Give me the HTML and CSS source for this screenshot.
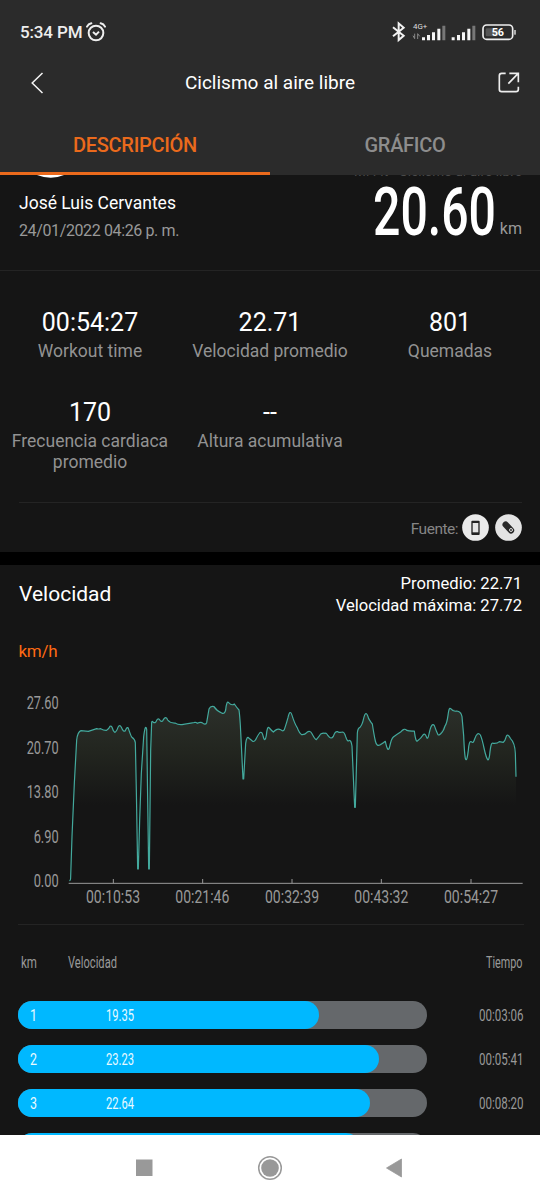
FILE: index.html
```html
<!DOCTYPE html>
<html lang="es">
<head>
<meta charset="utf-8">
<title>Ciclismo al aire libre</title>
<link rel="stylesheet" href="styles.css">
</head>
<body>
<div class="phone">
  <header class="top">
    <div class="status">
      <span class="clock">5:34 PM</span>
      <svg class="alarm" width="20" height="20" viewBox="0 0 60 60" fill="none" stroke="#eee" stroke-width="6"><circle cx="30" cy="33" r="22"/><path d="M3 14Q7 6 16 4M57 14Q53 6 44 4" stroke-linecap="round"/><path d="M21 30l9 8 9-9"/></svg>
      <svg class="signals" width="126" height="22" viewBox="0 0 378 66">
        <path d="M9 19l32 25L26 57V7l15 13L9 46" fill="none" stroke="#f2f2f2" stroke-width="6"/>
        <text x="69" y="24" class="net" textLength="43" lengthAdjust="spacingAndGlyphs">4G+</text>
        <path d="M69 44l5 9V38M83 54V38l6 8" fill="none" stroke="#888" stroke-width="3"/>
        <path d="M96 49h9v9h-9zM111 42h9v16h-9zM126 34h9v24h-9zM142 23h9v35h-9zM185 49h9v9h-9zM201 42h9v16h-9zM216 34h9v24h-9zM232 23h9v35h-9z" fill="#f5f5f5"/>
        <path d="M157 14h9v44h-9zM247 14h9v44h-9z" fill="#777"/>
        <rect x="287" y="22" width="37" height="24" rx="4" fill="#555"/>
        <rect x="279" y="12" width="89" height="43" rx="11" fill="none" stroke="#eee" stroke-width="5"/>
        <rect x="373" y="27" width="4" height="14" fill="#eee"/>
        <text x="305" y="45" class="batt" textLength="37" lengthAdjust="spacingAndGlyphs">56</text>
      </svg>
    </div>
    <div class="titlebar">
      <svg width="14" height="22" viewBox="0 0 14 22" fill="none" stroke="#f4f4f4" stroke-width="1.5"><path d="M11.5 1L1.2 11l10.300 10"/></svg>
      <h1>Ciclismo al aire libre</h1>
      <svg width="22" height="22" viewBox="0 0 66 66" fill="none" stroke="#eee" stroke-width="5"><path d="M23 4H11Q4 4 4 11V52Q4 59 11 59H54Q61 59 61 52M61 54V44"/><path d="M34 4H61V31M60 5L31 35"/></svg>
    </div>
    <nav class="tabs"><span class="tab active">DESCRIPCIÓN</span><span class="tab">GRÁFICO</span></nav>
  </header>

  <section class="summary">
    <div class="peek">
      <svg class="avatar" width="40" height="4" viewBox="0 0 40 4"><path d="M6 0H33Q20 5.500 6 0" fill="#fff"/></svg>
      <p class="origin">Mi Fit - Ciclismo al aire libre</p>
    </div>
    <div class="who"><p class="name">José Luis Cervantes</p><p class="date">24/01/2022 04:26 p. m.</p></div>
    <div class="distance">
      <svg width="124" height="62" viewBox="0 0 124 62"><text class="big" x="0" y="52" textLength="123" lengthAdjust="spacingAndGlyphs">20.60</text></svg>
      <span class="unit">km</span>
    </div>
  </section>

  <section class="stats">
    <div class="stat"><b>00:54:27</b><span>Workout time</span></div>
    <div class="stat"><b>22.71</b><span>Velocidad promedio</span></div>
    <div class="stat"><b>801</b><span>Quemadas</span></div>
    <div class="stat"><b>170</b><span>Frecuencia cardiaca promedio</span></div>
    <div class="stat"><b>--</b><span>Altura acumulativa</span></div>
  </section>
  <div class="source">
    <span>Fuente:</span>
    <svg width="27" height="27" viewBox="0 0 81 81"><circle cx="40.500" cy="40.500" r="40" fill="#eaeaea"/><rect x="28" y="20" width="25" height="43" rx="3" fill="#222"/><rect x="32" y="27" width="17" height="28" fill="#e4e4e4"/></svg>
    <svg class="band" width="27" height="27" viewBox="0 0 81 81"><circle cx="40.500" cy="40.500" r="40" fill="#e4e4e4"/><path d="M32 32L48 49" stroke="#292929" stroke-width="19" stroke-linecap="round"/><circle cx="48" cy="48" r="4.500" fill="none" stroke="#ddd" stroke-width="3"/></svg>
  </div>
  <div class="gap"></div>

  <section class="speed">
    <div class="speed-head">
      <h2>Velocidad</h2>
      <div class="facts"><p>Promedio: 22.71</p><p>Velocidad máxima: 27.72</p></div>
    </div>
    <p class="kmh">km/h</p>
    <svg class="chart" width="540" height="230" viewBox="0 0 1620 690">
      <defs><linearGradient id="fade" gradientUnits="userSpaceOnUse" x1="0" y1="30" x2="0" y2="345"><stop offset="0" stop-color="#2d312c"/><stop offset=".5" stop-color="#22251f"/><stop offset="1" stop-color="#151515"/></linearGradient></defs>
      <path fill="url(#fade)" d="M212 570L216 440 223 280 230 150 235 128 243 122 265 124 290 116 320 121 333 108 344 127 359 107 371 125 383 112 395 141 405 152 409 300 414 537 419 390 424 250 431 140 436 111 440 120 447 537 452 180 455 93 464 98 475 86 485 95 498 82 510 98 540 106 610 98 618 104 627 57 636 48 648 54 665 69 675 68 683 35 695 45 703 42 717 60 723 120 730 267 737 160 743 141 763 155 786 127 795 151 803 112 822 125 835 118 852 122 870 69 890 118 905 135 931 124 949 149 965 130 980 130 993 145 1008 125 1032 127 1044 152 1055 154 1060 230 1065 352 1072 120 1085 110 1098 69 1116 101 1130 164 1155 154 1164 178 1180 141 1213 116 1243 123 1251 153 1274 131 1282 144 1298 104 1316 134 1338 100 1349 54 1384 66 1398 209 1409 154 1419 157 1434 130 1464 210 1475 160 1512 155 1523 135 1543 170 1548 260V345H212z"/>
      <path class="line" d="M208 572Q212 572 212 560L216 440 223 280 230 150Q233 125 243 122L265 124Q280 119 290 116 296 118 302 116 312 122 320 121 326 118 330 109 334 106 337 114 340 125 344 127 349 126 354 112 359 102 364 112 370 127 376 122 381 108 385 115 392 136 395 141 405 148 406 158L409 300 413 537H415L419 390 424 250 431 140Q436 99 440 118L446 537H448L452 180 455 97Q456 91 459 96 466 102 470 91 475 82 480 91 486 98 490 89 498 76 503 90 511 100 525 99 536 106 550 103L582 98Q587 96 592 100 600 96 606 98 616 107 620 98L627 57Q632 46 642 50 649 62 665 69 674 74 677 60 680 30 686 38 695 48 703 42 711 54 717 60 719 74 721 105L729 267H731L737 160Q741 135 747 145 753 149 758 154 764 157 770 143 775 134 779 129 786 121 790 141 795 159 799 136 802 105 808 114 814 121 820 126 826 120 831 118 838 117 842 119 849 126 853 119 860 98 864 83 870 56 876 76 884 101 891 112 898 130 905 134 914 135 921 127 930 120 936 131 945 148 949 149 957 140 962 132 969 128 976 130 979 128 984 137 993 150 1000 139 1005 123 1013 125 1020 129 1027 126 1033 126 1037 140 1042 156 1047 152 1053 148 1056 168L1064 352H1066L1072 130Q1073 114 1080 112 1087 104 1091 85 1098 56 1106 86 1113 98 1117 102 1122 135 1126 153 1130 171 1141 164 1150 159 1156 154 1164 192 1169 170 1174 146 1180 141 1190 133 1203 125 1213 113 1220 121 1228 124 1243 123 1247 157 1252 153 1264 144 1269 135 1275 128 1279 140 1283 152 1287 132 1295 94 1303 107 1309 124 1313 132 1316 140 1326 127 1331 122 1335 108 1341 99 1344 76 1347 50 1352 56 1360 66 1370 63 1383 64 1386 80L1391 137Q1394 210 1398 209 1401 212 1405 181 1407 151 1414 155 1420 162 1424 147 1432 123 1441 135 1446 146 1452 174 1459 206 1464 210 1468 208 1470 185 1473 155 1480 160 1492 161 1498 155L1510 157Q1515 153 1519 139 1523 130 1531 145 1545 159 1546 190L1548 260"/>
      <path class="axis" d="M206 580H1568M340 580V567M608 580V567M876 580V567M1144 580V567M1413 580V567"/>
      <g class="axis-text">
        <text x="80" y="57" textLength="96" lengthAdjust="spacingAndGlyphs">27.60</text><text x="80" y="191" textLength="96" lengthAdjust="spacingAndGlyphs">20.70</text><text x="80" y="324" textLength="96" lengthAdjust="spacingAndGlyphs">13.80</text><text x="101" y="459" textLength="75" lengthAdjust="spacingAndGlyphs">6.90</text><text x="101" y="592" textLength="75" lengthAdjust="spacingAndGlyphs">0.00</text>
        <text x="258" y="639" textLength="162" lengthAdjust="spacingAndGlyphs">00:10:53</text><text x="526" y="639" textLength="162" lengthAdjust="spacingAndGlyphs">00:21:46</text><text x="795" y="639" textLength="162" lengthAdjust="spacingAndGlyphs">00:32:39</text><text x="1063" y="639" textLength="162" lengthAdjust="spacingAndGlyphs">00:43:32</text><text x="1332" y="639" textLength="162" lengthAdjust="spacingAndGlyphs">00:54:27</text>
      </g>
    </svg>
  </section>

  <section class="laps">
    <div class="lap-head">
      <svg width="505" height="22" viewBox="0 0 505 22"><text x="3" y="16" textLength="16" lengthAdjust="spacingAndGlyphs">km</text><text x="50" y="16" textLength="49" lengthAdjust="spacingAndGlyphs">Velocidad</text><text x="468" y="16" textLength="36.500" lengthAdjust="spacingAndGlyphs">Tiempo</text></svg>
    </div>
    <div class="lap"><div class="track"><div class="fill" style="width:301px"><svg width="140" height="28"><text x="12" y="20" textLength="7" lengthAdjust="spacingAndGlyphs">1</text><text x="88" y="20" textLength="28" lengthAdjust="spacingAndGlyphs">19.35</text></svg></div></div><svg width="46" height="28"><text x="1" y="20" textLength="44.500" lengthAdjust="spacingAndGlyphs">00:03:06</text></svg></div>
    <div class="lap"><div class="track"><div class="fill" style="width:360.500px"><svg width="140" height="28"><text x="12" y="20" textLength="7" lengthAdjust="spacingAndGlyphs">2</text><text x="88" y="20" textLength="28" lengthAdjust="spacingAndGlyphs">23.23</text></svg></div></div><svg width="46" height="28"><text x="1" y="20" textLength="44.500" lengthAdjust="spacingAndGlyphs">00:05:41</text></svg></div>
    <div class="lap"><div class="track"><div class="fill" style="width:351.500px"><svg width="140" height="28"><text x="12" y="20" textLength="7" lengthAdjust="spacingAndGlyphs">3</text><text x="88" y="20" textLength="28" lengthAdjust="spacingAndGlyphs">22.64</text></svg></div></div><svg width="46" height="28"><text x="1" y="20" textLength="44.500" lengthAdjust="spacingAndGlyphs">00:08:20</text></svg></div>
    <div class="lap"><div class="track"><div class="fill" style="width:342px"></div></div></div>
  </section>

  <footer class="navbar">
    <svg width="26" height="26" viewBox="0 0 26 26"><rect x="5" y="4.500" width="16.500" height="16.500" fill="#999"/></svg>
    <svg width="26" height="26" viewBox="0 0 26 26"><circle cx="13" cy="13" r="11.300" fill="none" stroke="#999" stroke-width="1.500"/><circle cx="13" cy="13" r="8.800" fill="#999"/></svg>
    <svg width="26" height="26" viewBox="0 0 26 26"><path d="M5.500 13L20.500 4v18z" fill="#999" stroke="#999" stroke-width=".8" stroke-linejoin="round"/></svg>
  </footer>
</div>
</body>
</html>
```
FILE: styles.css
```css
* { box-sizing: border-box; }
body, h1, h2, p { margin: 0; font-weight: 400; }
body { background: #151515; font-family: Roboto, sans-serif; color: #fff; }
svg { display: block; flex: none; }
.phone { width: 540px; height: 1200px; overflow: hidden; display: flex; flex-direction: column; background: #151515; }
.phone > * { flex: none; }

.top { height: 175px; background: #2b2b2b; }
.status { height: 64px; padding: 0 24px 0 20px; display: flex; align-items: center; }
.clock { font-size: 17px; font-weight: 500; line-height: 20px; color: #eee; letter-spacing: -.15px; }
.alarm { margin-left: 4px; }
.signals { margin-left: auto; }
.net { font-size: 22px; fill: #ddd; }
.batt { font-size: 32px; font-weight: 700; fill: #fff; }
.titlebar { height: 37px; padding: 0 20px 0 31px; display: flex; align-items: center; justify-content: space-between; }
.titlebar h1 { font-size: 19px; line-height: 24px; margin-right: 3px; }
.tabs { height: 74px; display: grid; grid-template-columns: 1fr 1fr; }
.tab { padding-top: 32px; text-align: center; font-size: 20px; line-height: 24px; font-weight: 500; letter-spacing: -.3px; color: #8d8d8d; }
.tab.active { color: #eb6a1c; border-bottom: 3px solid #eb6a1c; }

.summary { height: 96px; display: grid; grid-template-columns: 1fr auto; grid-template-rows: 4px 1fr; padding: 0 18px 0 19px; border-bottom: 1px solid #242424; }
.peek { grid-column: 1 / 3; height: 4px; display: flex; justify-content: space-between; align-items: flex-end; overflow: hidden; }
.avatar { margin-left: 12px; }
.origin { font-size: 13.5px; line-height: 14px; color: #4a4a4a; padding-bottom: 1px; white-space: nowrap; letter-spacing: .1px; }
.name { margin-top: 12px; font-size: 17.5px; line-height: 24px; }
.date { margin-top: 4px; font-size: 16px; line-height: 24px; color: #999; letter-spacing: -.38px; }
.distance { display: flex; align-items: flex-start; gap: 3px; padding-top: 4px; }
.big { font-size: 67px; font-weight: 500; fill: #fff; }
.unit { padding-top: 36px; font-size: 16px; line-height: 20px; color: #999; }

.stats { height: 231px; display: grid; grid-template-columns: repeat(3, 180px); grid-template-rows: 90px 90px; padding-top: 37px; }
.stat { display: flex; flex-direction: column; align-items: center; text-align: center; }
.stat b { font-weight: 400; font-size: 25px; line-height: 30px; }
.stat span { width: 172px; margin-top: 3px; font-size: 17.5px; line-height: 20.5px; color: #929292; }
.source { height: 50px; margin: 0 18px 0 19px; border-top: 1px solid #242424; display: flex; align-items: center; justify-content: flex-end; font-size: 15.5px; letter-spacing: -.5px; color: #858585; }
.source span { margin-right: 4px; padding-top: 3px; }
.band { margin-left: 6px; }
.gap { height: 13px; background: #000; }

.speed { height: 359px; }
.speed-head { height: 75px; padding: 7px 18px 0 19px; display: flex; justify-content: space-between; }
.speed-head h2 { font-size: 21px; line-height: 26px; padding-top: 9px; }
.facts { font-size: 16.600px; line-height: 22px; padding-top: .5px; text-align: right; }
.kmh { height: 50px; padding-left: 18.500px; font-size: 17px; line-height: 22px; letter-spacing: -.25px; color: #ff6a13; }
.line { fill: none; stroke: #43a99d; stroke-width: 3.600; stroke-linejoin: round; }
.axis { fill: none; stroke: #999; stroke-width: 3; }
.axis-text { font-size: 56px; fill: #999; }

.laps { height: 211px; margin: 0 16.500px 0 18px; border-top: 1px solid #242424; overflow: hidden; }
.lap-head { height: 76px; padding-top: 27px; }
.lap { height: 28px; margin-bottom: 16px; display: flex; justify-content: space-between; }
.laps text { font-size: 16px; fill: #999; }
.track { width: 408.500px; height: 28px; border-radius: 14px; background: #65686b; }
.fill { height: 28px; border-radius: 14px; background: #00b8ff; }
.laps .fill text { fill: #e9faff; }
.navbar { height: 65px; background: #fff; padding: 0 133.500px 0 130.500px; display: grid; grid-template-columns: 126.500px 124px 26px; align-items: center; }
```
